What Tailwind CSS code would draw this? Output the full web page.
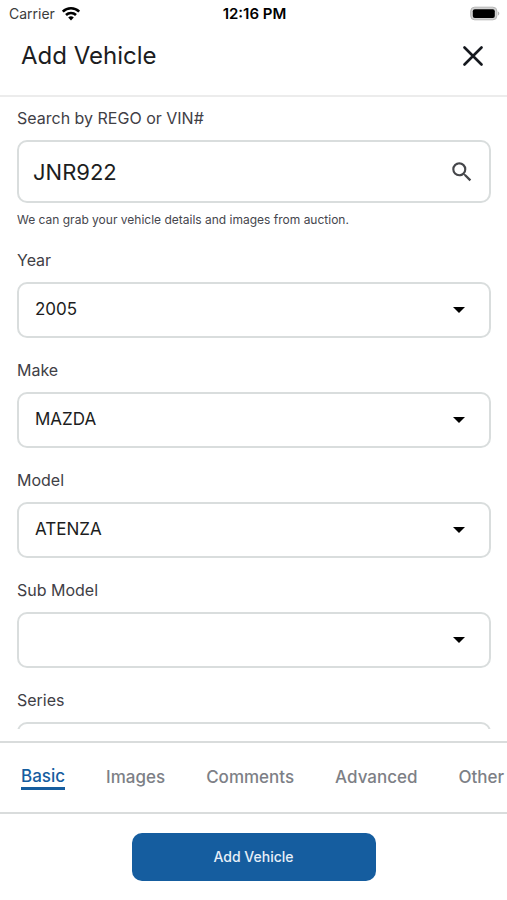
<!DOCTYPE html>
<html lang="en">
<head>
  <meta charset="UTF-8" />
  <meta name="viewport" content="width=device-width, initial-scale=1" />
  <title>Add Vehicle</title>
  <script src="https://cdn.jsdelivr.net/npm/@tailwindcss/browser@4"></script>
</head>
<body class="bg-white font-['Inter',sans-serif] text-[#1c1d21]">

  <div class="flex flex-col h-screen">

    <!-- Status bar -->
    <div class="grid grid-cols-3 items-center h-7 pl-[9px] pr-[7px] text-sm text-black">
      <div class="flex items-center gap-1.5">
        <span class="text-[#3c3c3c]">Carrier</span>
        <svg class="w-5 h-4" viewBox="0 0 20 16" fill="none" stroke="currentColor" stroke-width="2.6">
          <path d="M1.8 5.6a11.8 11.8 0 0 1 16.4 0" />
          <path d="M5 9a7.2 7.2 0 0 1 10 0" />
          <path d="M10 14.4l-2.8-2.9a4 4 0 0 1 5.6 0z" fill="currentColor" stroke="none" />
        </svg>
      </div>
      <span class="text-center text-[15px] font-semibold">12:16 PM</span>
      <svg class="justify-self-end w-8 h-4" viewBox="0 0 32 16">
        <rect x="2.7" y="1.2" width="26.2" height="12.6" rx="4" fill="#d2d2d2" stroke="#b5b5b5" />
        <rect x="4.8" y="3.2" width="22" height="8.8" rx="2" fill="#000" />
        <path d="M30 5.6v4c1.8-.8 1.8-3.2 0-4z" fill="#b5b5b5" />
      </svg>
    </div>

    <!-- Header -->
    <header class="flex items-center justify-between pl-[21px] pr-6 pb-3 h-[69px] border-b-2 border-[#ececec]">
      <h1 class="text-2xl">Add Vehicle</h1>
      <button type="button" aria-label="Close">
        <svg class="w-5 h-5" viewBox="0 0 20 20" fill="none" stroke="#15181e" stroke-width="2.6" stroke-linecap="round">
          <path d="M1.5 1.5l17 17M18.5 1.5l-17 17" />
        </svg>
      </button>
    </header>

    <!-- Form -->
    <main class="flex-1 min-h-0 overflow-hidden pl-[17px] pr-4 pt-2.5 mb-3">
      <form id="vehicle-form" class="flex flex-col gap-[21px]">
        <div>
          <label for="search" class="block mb-[11px] text-base leading-[22px] text-[#3f4046]">Search by REGO or VIN#</label>
          <div class="relative">
            <input type="text" id="search" name="search" value="JNR922" autocomplete="off" class="block w-full h-[63px] border-2 border-[#d9dddd] rounded-[10px] pl-3.5 pr-14 text-[22px] focus:outline-none" />
            <button type="submit" aria-label="Search" class="absolute right-4 top-1/2 -translate-y-1/2">
              <svg class="w-[26px] h-[26px]" viewBox="0 0 24 24" fill="#45464a">
                <path d="M15.5 14h-.79l-.28-.27A6.47 6.47 0 0 0 16 9.5 6.5 6.5 0 1 0 9.5 16c1.61 0 3.09-.59 4.23-1.57l.27.28v.79l5 4.99L20.49 19zm-6 0C7.01 14 5 11.99 5 9.5S7.01 5 9.5 5 14 7.01 14 9.5 11.99 14 9.5 14z" />
              </svg>
            </button>
          </div>
          <p class="mt-[9px] text-xs leading-4 text-[#45464d]">We can grab your vehicle details and images from auction.</p>
        </div>

        <div>
          <label for="year" class="block mb-[11px] text-base leading-[22px] text-[#3f4046]">Year</label>
          <div class="relative">
            <select id="year" name="year" class="block w-full h-14 appearance-none border-2 border-[#d9dddd] rounded-[10px] px-4 text-[17px] bg-white focus:outline-none">
              <option>2005</option>
            </select>
            <svg class="absolute right-6 top-1/2 -translate-y-1/2 w-4 h-2 pointer-events-none" viewBox="0 0 16 8"><path d="M2 1h12L8 7z" /></svg>
          </div>
        </div>

        <div>
          <label for="make" class="block mb-[11px] text-base leading-[22px] text-[#3f4046]">Make</label>
          <div class="relative">
            <select id="make" name="make" class="block w-full h-14 appearance-none border-2 border-[#d9dddd] rounded-[10px] px-4 text-[17px] bg-white focus:outline-none">
              <option>MAZDA</option>
            </select>
            <svg class="absolute right-6 top-1/2 -translate-y-1/2 w-4 h-2 pointer-events-none" viewBox="0 0 16 8"><path d="M2 1h12L8 7z" /></svg>
          </div>
        </div>

        <div>
          <label for="model" class="block mb-[11px] text-base leading-[22px] text-[#3f4046]">Model</label>
          <div class="relative">
            <select id="model" name="model" class="block w-full h-14 appearance-none border-2 border-[#d9dddd] rounded-[10px] px-4 text-[17px] bg-white focus:outline-none">
              <option>ATENZA</option>
            </select>
            <svg class="absolute right-6 top-1/2 -translate-y-1/2 w-4 h-2 pointer-events-none" viewBox="0 0 16 8"><path d="M2 1h12L8 7z" /></svg>
          </div>
        </div>

        <div>
          <label for="submodel" class="block mb-[11px] text-base leading-[22px] text-[#3f4046]">Sub Model</label>
          <div class="relative">
            <select id="submodel" name="submodel" class="block w-full h-14 appearance-none border-2 border-[#d9dddd] rounded-[10px] px-4 text-[17px] bg-white focus:outline-none">
              <option></option>
            </select>
            <svg class="absolute right-6 top-1/2 -translate-y-1/2 w-4 h-2 pointer-events-none" viewBox="0 0 16 8"><path d="M2 1h12L8 7z" /></svg>
          </div>
        </div>

        <div>
          <label for="series" class="block mb-[11px] text-base leading-[22px] text-[#3f4046]">Series</label>
          <select id="series" name="series" class="block w-full h-14 appearance-none border-2 border-[#d9dddd] rounded-[10px] px-4 text-[17px] bg-white focus:outline-none">
            <option></option>
          </select>
        </div>
      </form>
    </main>

    <!-- Tabs -->
    <nav class="flex items-center gap-[41px] h-[73px] pl-[21px] border-y-2 border-[#d9dcdc] overflow-hidden text-[17px] font-medium text-[#7d7f86]">
      <button type="button" class="shrink-0 border-b-3 border-[#155d9f] text-[#155d9f] leading-[22px]">Basic</button>
      <button type="button" class="shrink-0">Images</button>
      <button type="button" class="shrink-0">Comments</button>
      <button type="button" class="shrink-0">Advanced</button>
      <button type="button" class="shrink-0">Other</button>
    </nav>

    <footer class="flex justify-center py-[19px]">
      <button type="submit" form="vehicle-form" class="w-[244px] h-12 rounded-[10px] bg-[#155d9f] text-sm font-medium text-[#e6eff8]">Add Vehicle</button>
    </footer>

  </div>

</body>
</html>
